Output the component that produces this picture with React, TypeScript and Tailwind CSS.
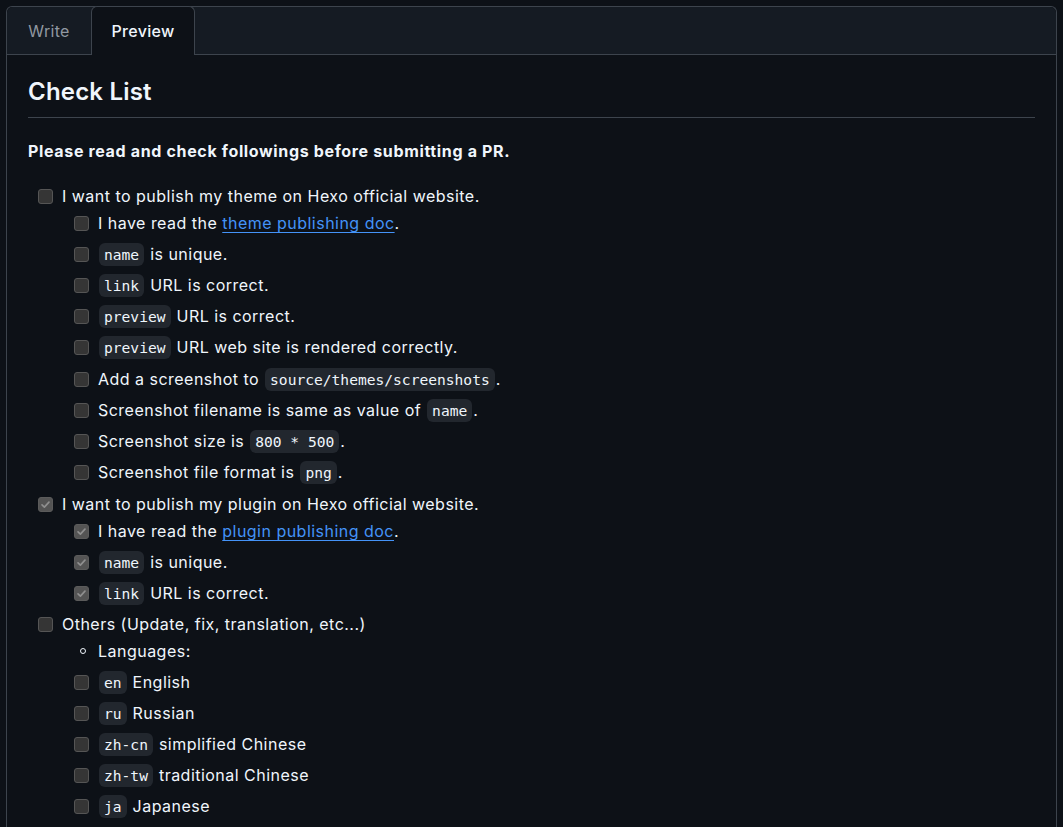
import type { ReactNode } from 'react';

const sans = 'font-["Inter","Liberation_Sans",sans-serif]';

function Code({ children }: { children: ReactNode }) {
  return (
    <code className='mx-[1px] inline-block rounded-md bg-[#22272e] px-[5px] py-[2px] font-["DejaVu_Sans_Mono",monospace] text-[14.6px] leading-[19px] tracking-normal text-[#f0f6fc]'>
      {children}
    </code>
  );
}

function Box({ checked = false }: { checked?: boolean }) {
  return (
    <span
      className={
        'flex h-[15px] w-[15px] shrink-0 items-center justify-center rounded-[3px] border ' +
        (checked ? 'border-[#5b5b5b] bg-[#545454]' : 'border-[#555555] bg-[#353535]')
      }
    >
      {checked && (
        <svg viewBox="0 0 12 12" className="h-[11px] w-[11px]">
          <path d="M2.2 6.4 L4.8 8.9 L9.8 3.4" fill="none" stroke="#8f8f8f" strokeWidth="1.8" strokeLinecap="round" strokeLinejoin="round" />
        </svg>
      )}
    </span>
  );
}

function Row({ children, checked, mt, sub }: { children: ReactNode; checked?: boolean; mt: string; sub?: boolean }) {
  return (
    <li className={'flex h-6 items-center gap-[9px] ' + mt + (sub ? ' pl-[36px]' : '')}>
      <Box checked={checked} />
      <span className="whitespace-nowrap">{children}</span>
    </li>
  );
}

export default function App() {
  return (
    <div className={'min-h-[827px] bg-[#0d1117] px-[6px] pt-[6px] text-[#f0f6fc] ' + sans}>
      <div className="rounded-t-md border border-b-0 border-[#3d444d]">
        {/* tab bar */}
        <div className="flex h-12 rounded-t-md bg-[#151b23]">
          <div className="flex w-[84px] items-center justify-center border-b border-[#3d444d] text-[16px] tracking-[0.3px] text-[#9198a1]">
            Write
          </div>
          <div className="-mt-px flex w-[104px] items-center justify-center rounded-t-md border border-b-0 border-[#3d444d] bg-[#0d1117] text-[16px] font-medium tracking-[0.3px]">
            Preview
          </div>
          <div className="flex-1 border-b border-[#3d444d]" />
        </div>

        {/* preview body */}
        <div className="px-[21px] pb-4 text-[16px] leading-6 tracking-[0.48px]">
          <h2 className="mt-[22px] border-b border-[#3d444d] pb-[10px] text-[24px] font-semibold leading-[30px] tracking-[0.2px]">
            Check List
          </h2>
          <p className="mt-[21px] font-bold tracking-[0.65px]">Please read and check followings before submitting a PR.</p>

          <ul className="mt-[21px] pl-[10px]">
            <Row mt="mt-0">I want to publish my theme on Hexo official website.</Row>
            <Row mt="mt-[3px]" sub>
              I have read the{' '}
              <a className="text-[#4493f8] underline underline-offset-[3px]">theme publishing doc</a>.
            </Row>
            <Row mt="mt-[7px]" sub>
              <Code>name</Code> is unique.
            </Row>
            <Row mt="mt-[7px]" sub>
              <Code>link</Code> URL is correct.
            </Row>
            <Row mt="mt-[7px]" sub>
              <Code>preview</Code> URL is correct.
            </Row>
            <Row mt="mt-[7px]" sub>
              <Code>preview</Code> URL web site is rendered correctly.
            </Row>
            <Row mt="mt-[8px]" sub>
              Add a screenshot to <Code>source/themes/screenshots</Code>.
            </Row>
            <Row mt="mt-[7px]" sub>
              Screenshot filename is same as value of <Code>name</Code>.
            </Row>
            <Row mt="mt-[7px]" sub>
              Screenshot size is <Code>800 * 500</Code>.
            </Row>
            <Row mt="mt-[7px]" sub>
              Screenshot file format is <Code>png</Code>.
            </Row>

            <Row mt="mt-[8px]" checked>
              I want to publish my plugin on Hexo official website.
            </Row>
            <Row mt="mt-[3px]" sub checked>
              I have read the{' '}
              <a className="text-[#4493f8] underline underline-offset-[3px]">plugin publishing doc</a>.
            </Row>
            <Row mt="mt-[7px]" sub checked>
              <Code>name</Code> is unique.
            </Row>
            <Row mt="mt-[7px]" sub checked>
              <Code>link</Code> URL is correct.
            </Row>

            <Row mt="mt-[7px]">Others (Update, fix, translation, etc...)</Row>
            <li className="mt-[3px] flex h-6 items-center gap-[12px] pl-[42px]">
              <span className="h-[6px] w-[6px] rounded-full border border-[#f0f6fc]" />
              <span>Languages:</span>
            </li>
            <Row mt="mt-[7px]" sub>
              <Code>en</Code> English
            </Row>
            <Row mt="mt-[7px]" sub>
              <Code>ru</Code> Russian
            </Row>
            <Row mt="mt-[7px]" sub>
              <Code>zh-cn</Code> simplified Chinese
            </Row>
            <Row mt="mt-[7px]" sub>
              <Code>zh-tw</Code> traditional Chinese
            </Row>
            <Row mt="mt-[7px]" sub>
              <Code>ja</Code> Japanese
            </Row>
          </ul>
        </div>
      </div>
    </div>
  );
}
